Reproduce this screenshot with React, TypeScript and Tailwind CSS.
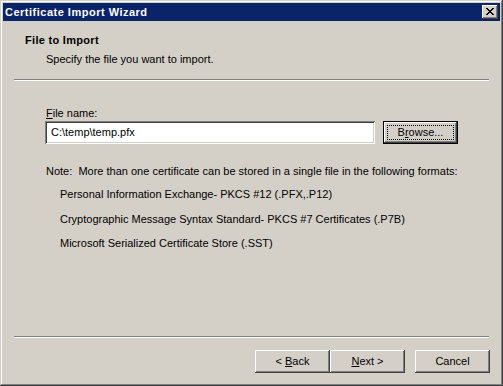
import type { ReactNode } from 'react';

const raised = 'shadow-[inset_-1px_-1px_#404040,inset_1px_1px_#ffffff,inset_-2px_-2px_#808080,inset_2px_2px_#d4d0c8]';

function WinButton({ children, isDefault = false }: { children: ReactNode; isDefault?: boolean }) {
  if (isDefault) {
    return (
      <button className="w-[75px] h-[23px] bg-[#d4d0c8] border border-black p-0 flex">
        <span className={`flex-1 flex items-center justify-center ${raised}`}>
          <span className="flex-1 mx-[3px] h-[15px] border border-dotted border-black flex items-center justify-center">
            {children}
          </span>
        </span>
      </button>
    );
  }
  return (
    <button className={`w-[75px] h-[23px] bg-[#d4d0c8] flex items-center justify-center ${raised}`}>
      {children}
    </button>
  );
}

function Separator() {
  return (
    <div className="mx-[11px]">
      <div className="h-px bg-[#808080]" />
      <div className="h-px bg-white" />
    </div>
  );
}

export default function App() {
  const formats = [
    'Personal Information Exchange- PKCS #12 (.PFX,.P12)',
    'Cryptographic Message Syntax Standard- PKCS #7 Certificates (.P7B)',
    'Microsoft Serialized Certificate Store (.SST)',
  ];

  return (
    <div
      className="w-[503px] h-[386px] bg-[#d4d0c8] p-[3px] flex flex-col text-[11px] leading-[13px] text-black shadow-[inset_-1px_-1px_#404040,inset_1px_1px_#d4d0c8,inset_-2px_-2px_#808080,inset_2px_2px_#ffffff]"
      style={{ fontFamily: '"Liberation Sans", Arial, sans-serif' }}
    >
      {/* title bar */}
      <div className="h-[18px] bg-[#0a246a] flex items-center justify-between pl-[2px] pr-[2px]">
        <span className="text-white font-bold text-[11px] tracking-[0.5px]">Certificate Import Wizard</span>
        <div className={`w-[16px] h-[14px] bg-[#d4d0c8] flex items-center justify-center ${raised}`}>
          <svg width="8" height="7" viewBox="0 0 8 7" shapeRendering="crispEdges" className="-mt-px">
            <path
              fill="#000"
              d="M0 0h2v1H0z M6 0h2v1H6z M1 1h2v1H1z M5 1h2v1H5z M2 2h4v1H2z M3 3h2v1H3z M2 4h4v1H2z M1 5h2v1H1z M5 5h2v1H5z M0 6h2v1H0z M6 6h2v1H6z"
            />
          </svg>
        </div>
      </div>

      {/* header */}
      <div className="pl-[22px] mt-[13px] font-bold tracking-[0.3px]">File to Import</div>
      <div className="pl-[43px] mt-[6px]">Specify the file you want to import.</div>
      <div className="mt-[13px]">
        <Separator />
      </div>

      {/* body */}
      <div className="pl-[43px] mt-[26px]">
        <span className="underline">F</span>ile name:
      </div>
      <div className="pl-[42px] mt-px flex gap-[8px]">
        <div className="w-[330px] h-[23px] bg-white flex items-center pl-[6px] shadow-[inset_1px_1px_#808080,inset_-1px_-1px_#ffffff,inset_2px_2px_#404040,inset_-2px_-2px_#d4d0c8]">
          C:\temp\temp.pfx
        </div>
        <WinButton isDefault>
          B<span className="underline">r</span>owse...
        </WinButton>
      </div>

      <div className="pl-[43px] mt-[21px]">
        Note:&nbsp; More than one certificate can be stored in a single file in the following formats:
      </div>
      <div className="pl-[57px] mt-[10px] flex flex-col gap-[11.5px]">
        {formats.map((f) => (
          <div key={f}>{f}</div>
        ))}
      </div>

      {/* footer */}
      <div className="mt-auto">
        <Separator />
      </div>
      <div className="mt-[12px] mb-[10px] pr-[10px] flex justify-end">
        <WinButton>
          &lt;&nbsp;<span className="underline">B</span>ack
        </WinButton>
        <WinButton>
          <span className="underline">N</span>ext&nbsp;&gt;
        </WinButton>
        <div className="ml-[10px]">
          <WinButton>Cancel</WinButton>
        </div>
      </div>
    </div>
  );
}
